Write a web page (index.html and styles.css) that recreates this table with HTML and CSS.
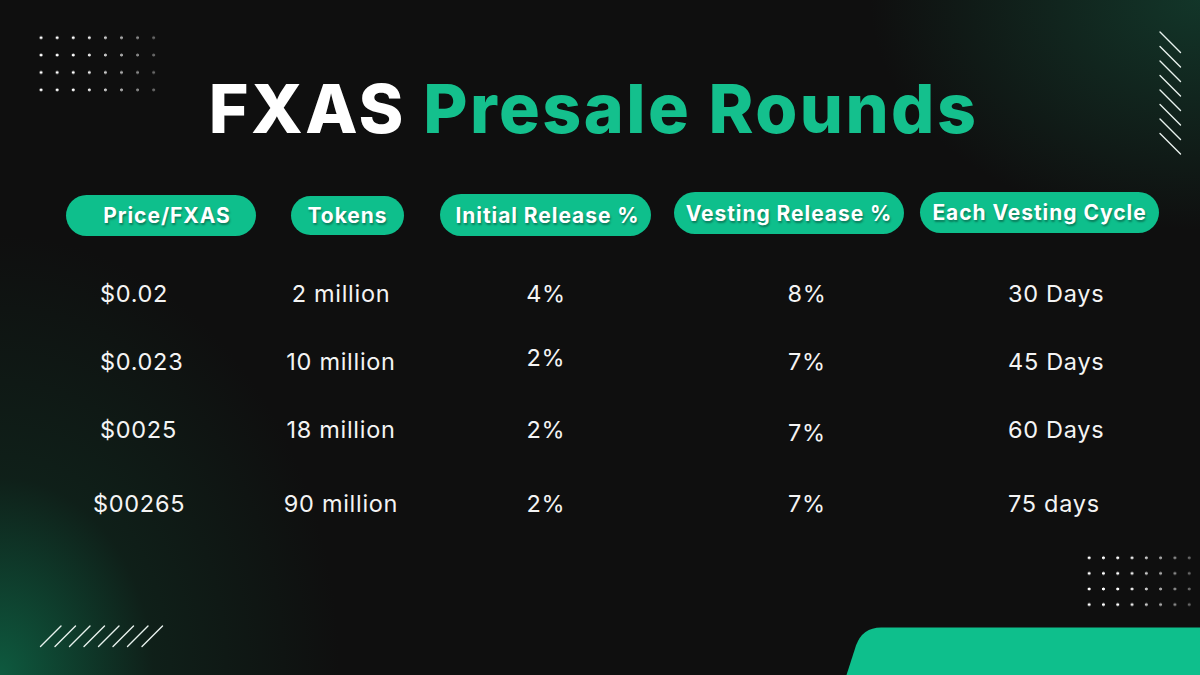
FILE: index.html
```html
<!DOCTYPE html>
<html lang="en">
<head>
<meta charset="utf-8">
<title>FXAS Presale Rounds</title>
<link rel="stylesheet" href="styles.css">
</head>
<body>
<div class="slide">
  <div class="glow glow-tr"></div>
  <div class="glow glow-bl"></div>
  <div class="dots dots-tl"></div>
  <div class="dots dots-br"></div>
  <svg class="deco" width="1200" height="675" viewBox="0 0 1200 675" aria-hidden="true">
    <g class="slashes">
      <line x1="1160" y1="32" x2="1180.5" y2="52.5"/>
      <line x1="1160" y1="46.5" x2="1180.5" y2="67"/>
      <line x1="1160" y1="61" x2="1180.5" y2="81.5"/>
      <line x1="1160" y1="75.5" x2="1180.5" y2="96"/>
      <line x1="1160" y1="90" x2="1180.5" y2="110.5"/>
      <line x1="1160" y1="104.5" x2="1180.5" y2="125"/>
      <line x1="1160" y1="119" x2="1180.5" y2="139.5"/>
      <line x1="1160" y1="133.5" x2="1180.5" y2="154"/>
      <line x1="40.5" y1="646.5" x2="61" y2="626"/>
      <line x1="55" y1="646.5" x2="75.5" y2="626"/>
      <line x1="69.5" y1="646.5" x2="90" y2="626"/>
      <line x1="84" y1="646.5" x2="104.5" y2="626"/>
      <line x1="98.5" y1="646.5" x2="119" y2="626"/>
      <line x1="113" y1="646.5" x2="133.5" y2="626"/>
      <line x1="127.5" y1="646.5" x2="148" y2="626"/>
      <line x1="142" y1="646.5" x2="162.5" y2="626"/>
    </g>
    <path class="tab" d="M846.5 675 L856 645.5 Q862.5 627.5 881 627.5 L1200 627.5 L1200 675 Z"/>
  </svg>

  <h1 class="title"><span class="title-white">FXAS</span> <span class="title-green">Presale Rounds</span></h1>

  <div class="table">
    <div class="head">
      <div class="cell"><span class="pill pill-price">Price/FXAS</span></div>
      <div class="cell"><span class="pill pill-tokens">Tokens</span></div>
      <div class="cell"><span class="pill pill-initial">Initial Release %</span></div>
      <div class="cell"><span class="pill pill-vesting">Vesting Release %</span></div>
      <div class="cell"><span class="pill pill-cycle">Each Vesting Cycle</span></div>
    </div>

    <div class="row">
      <div class="cell c-price">$0.02</div>
      <div class="cell c-tokens">2 million</div>
      <div class="cell c-initial">4%</div>
      <div class="cell c-vesting">8%</div>
      <div class="cell c-cycle">30 Days</div>
    </div>
    <div class="row">
      <div class="cell c-price">$0.023</div>
      <div class="cell c-tokens">10 million</div>
      <div class="cell c-initial up">2%</div>
      <div class="cell c-vesting">7%</div>
      <div class="cell c-cycle">45 Days</div>
    </div>
    <div class="row">
      <div class="cell c-price">$0025</div>
      <div class="cell c-tokens">18 million</div>
      <div class="cell c-initial">2%</div>
      <div class="cell c-vesting down">7%</div>
      <div class="cell c-cycle">60 Days</div>
    </div>
    <div class="row row-last">
      <div class="cell c-price wide">$00265</div>
      <div class="cell c-tokens">90 million</div>
      <div class="cell c-initial">2%</div>
      <div class="cell c-vesting">7%</div>
      <div class="cell c-cycle">75 days</div>
    </div>
  </div>
</div>
</body>
</html>
```

FILE: styles.css
```css
* { box-sizing: border-box; }

html, body {
  margin: 0;
  padding: 0;
  background: #0f0f0f;
}

.slide {
  position: relative;
  width: 1200px;
  height: 675px;
  overflow: hidden;
  background: #0f0f0f;
  font-family: Inter, "Liberation Sans", sans-serif;
  color: #fff;
  padding-top: 74px;
}

/* decorations */
.glow {
  position: absolute;
  inset: 0;
  pointer-events: none;
}
.glow-tr {
  background: radial-gradient(ellipse 330px 230px at 100% 0%, rgba(20, 70, 52, 0.7), rgba(15, 15, 15, 0) 100%);
}
.glow-bl {
  background: radial-gradient(ellipse 340px 440px at 0% 100%, rgba(14, 90, 63, 1), rgba(15, 45, 33, 0.55) 45%, rgba(15, 15, 15, 0) 100%);
}

.dots {
  position: absolute;
  background-image: radial-gradient(circle, #fff 1.1px, rgba(255, 255, 255, 0) 1.8px);
  -webkit-mask-image: linear-gradient(to right, #000 35%, rgba(0, 0, 0, 0.3) 100%);
  mask-image: linear-gradient(to right, #000 35%, rgba(0, 0, 0, 0.3) 100%);
}
.dots-tl {
  left: 33px;
  top: 29.3px;
  width: 128.8px;
  height: 69.6px;
  background-size: 16.1px 17.4px;
}
.dots-br {
  left: 1081.5px;
  top: 549.5px;
  width: 114.4px;
  height: 62.4px;
  background-size: 14.3px 15.6px;
}

.deco {
  position: absolute;
  left: 0;
  top: 0;
}
.slashes line {
  stroke: #e8f2ee;
  stroke-width: 1.4;
  stroke-linecap: round;
}
.tab {
  fill: #0ebf8c;
}

/* title */
.title {
  position: relative;
  margin: 0 0 0 -13px;
  text-align: center;
  font-size: 68px;
  line-height: 68px;
  font-weight: 800;
  letter-spacing: 0.036em;
}
.title-white { color: #fff; }
.title-green { color: #14c08d; }

/* table */
.table {
  position: relative;
  margin-top: 50px;
}
.head,
.row {
  display: grid;
  grid-template-columns: 268px 146px 264px 258px 236px;
}
.head {
  height: 44px;
  align-items: start;
}
.pill {
  display: flex;
  align-items: center;
  justify-content: center;
  height: 41px;
  border-radius: 21px;
  background: #0ebf8c;
  color: #fff;
  font-weight: 700;
  font-size: 21px;
  letter-spacing: 0.045em;
  white-space: nowrap;
  text-shadow: 1px 2px 2px rgba(0, 0, 0, 0.35);
}
.pill-price { width: 190px; margin: 3px 0 0 66px; padding-left: 12px; }
.pill-tokens { width: 113px; height: 39px; margin: 4px 0 0 23px; }
.pill-initial { width: 211px; height: 42px; margin: 2px 0 0 26px; padding-left: 4px; }
.pill-vesting { width: 230px; height: 42px; margin: 0 0 0 -4px; }
.pill-cycle { width: 239px; margin: 0 0 0 -16px; }

.row {
  height: 68px;
  align-items: center;
  font-size: 23.5px;
  letter-spacing: 0.03em;
  line-height: 30px;
  color: #f4f4f4;
}
.head + .row { margin-top: 24px; }
.row-last { margin-top: 6px; }

.cell { white-space: nowrap; }
.c-price { padding-left: 100px; }
.c-price.wide { padding-left: 93px; }
.c-tokens, .c-initial, .c-vesting { text-align: center; }
.c-cycle { padding-left: 72px; }
.up { margin-top: -8px; }
.down { margin-top: 6px; }
```
